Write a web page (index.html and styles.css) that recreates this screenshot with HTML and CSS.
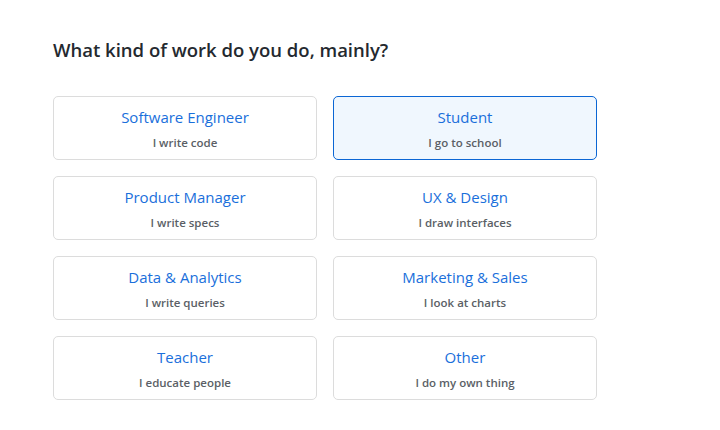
FILE: index.html
```html
<!DOCTYPE html>
<html>
<head>
<meta charset="utf-8">
<link rel="stylesheet" href="styles.css">
</head>
<body>
<div class="page">
  <h1 class="title">What kind of work do you do, mainly?</h1>
  <div class="grid">
    <div class="card"><div class="name">Software Engineer</div><div class="desc">I write code</div></div>
    <div class="card selected"><div class="name">Student</div><div class="desc">I go to school</div></div>
    <div class="card"><div class="name">Product Manager</div><div class="desc">I write specs</div></div>
    <div class="card"><div class="name">UX &amp; Design</div><div class="desc">I draw interfaces</div></div>
    <div class="card"><div class="name">Data &amp; Analytics</div><div class="desc">I write queries</div></div>
    <div class="card"><div class="name">Marketing &amp; Sales</div><div class="desc">I look at charts</div></div>
    <div class="card"><div class="name">Teacher</div><div class="desc">I educate people</div></div>
    <div class="card"><div class="name">Other</div><div class="desc">I do my own thing</div></div>
  </div>
</div>
</body>
</html>
```
FILE: styles.css
```css
html, body {
  margin: 0;
  padding: 0;
  background: #ffffff;
}
.page {
  padding: 38px 0 0 53px;
  font-family: "Open Sans", "Noto Sans", sans-serif;
}
.title {
  margin: 0;
  font-size: 18.5px;
  line-height: 24px;
  font-weight: 600;
  color: #24292f;
}
.grid {
  margin-top: 34px;
  display: grid;
  grid-template-columns: 264px 264px;
  column-gap: 16px;
  row-gap: 16px;
}
.card {
  box-sizing: border-box;
  height: 64px;
  border: 1px solid #dcdcdc;
  border-radius: 5px;
  padding: 8px 8px 8px;
  text-align: center;
  background: #fff;
}
.card.selected {
  border-color: #0b66d4;
  background: #f0f7fe;
}
.name {
  font-size: 15px;
  line-height: 24px;
  color: #1a6fdb;
}
.desc {
  margin-top: 6px;
  font-size: 11.5px;
  line-height: 16px;
  font-weight: 600;
  color: #5b5f66;
}
```
